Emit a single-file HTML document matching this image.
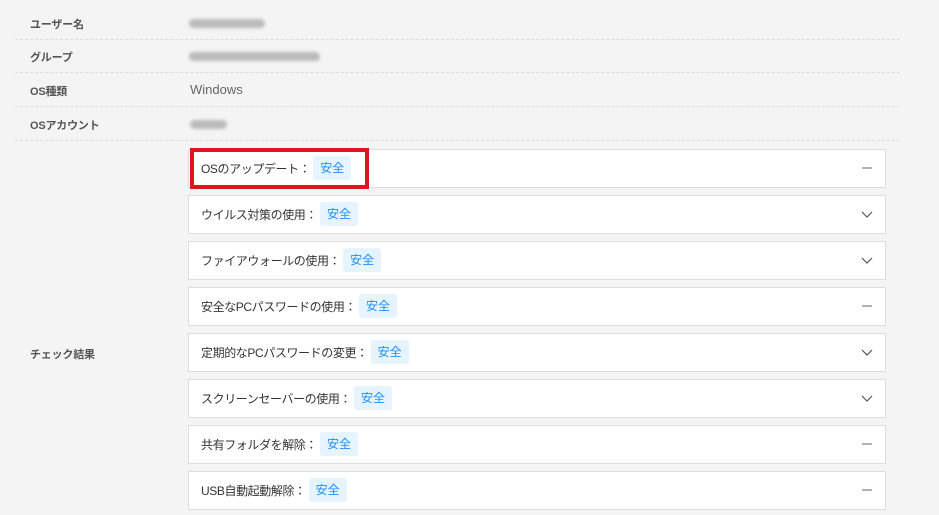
<!DOCTYPE html>
<html><head><meta charset="utf-8"><style>
body{margin:0;width:939px;height:515px;background:#f4f4f4;font-family:"Liberation Sans","Noto Sans CJK JP",sans-serif;position:relative;overflow:hidden}
.row{position:absolute;left:15px;width:885px;border-bottom:1px dashed #ddd}
.lab{position:absolute;left:30px;font-size:11px;letter-spacing:-0.2px;font-weight:bold;color:#555}
.val{position:absolute;left:190px;font-size:13px;color:#666}
.blur{position:absolute;height:9px;background:#bbb;border-radius:5px;filter:blur(1.5px)}
.p{position:absolute;left:188px;width:696px;height:37px;background:#fff;border:1px solid #ddd}
.p .t{position:absolute;left:12px;top:10px;font-size:12px;letter-spacing:-0.4px;color:#333;line-height:16px}
.b{display:inline-block;background:#e6f4ff;color:#1890ff;padding:3px 7px;border-radius:3px;margin-left:0;line-height:18px;vertical-align:middle;margin-top:-4px;font-size:12px;letter-spacing:0}
.ic{position:absolute;right:12px;top:12px;width:12px;height:12px}
</style></head><body>
<div class="row" style="top:0;height:39px"></div>
<div class="row" style="top:40px;height:32px"></div>
<div class="row" style="top:73px;height:33px"></div>
<div class="row" style="top:107px;height:33px"></div>
<div class="lab" style="top:16px">ユーザー名</div>
<div class="lab" style="top:49px">グループ</div>
<div class="lab" style="top:83px">OS種類</div>
<div class="lab" style="top:117px">OSアカウント</div>
<div class="lab" style="top:346px">チェック結果</div>
<div class="blur" style="left:189px;top:19px;width:76px"></div>
<div class="blur" style="left:189px;top:52px;width:131px"></div>
<div class="val" style="top:82px">Windows</div>
<div class="blur" style="left:190px;top:120px;width:37px"></div>

<div class="p" style="top:149px"><div class="t">OSのアップデート： <span class="b">安全</span></div><svg class="ic" viewBox="0 0 12 12"><path d="M1 6H11" stroke="#888" stroke-width="1.3"/></svg></div>
<div style="position:absolute;left:190px;top:148px;width:171px;height:33px;border:4px solid #e3141e"></div>
<div class="p" style="top:195px"><div class="t">ウイルス対策の使用： <span class="b">安全</span></div><svg class="ic" viewBox="0 0 12 12"><path d="M1 4L6 9L11 4" fill="none" stroke="#555" stroke-width="1.2"/></svg></div>
<div class="p" style="top:241px"><div class="t">ファイアウォールの使用： <span class="b">安全</span></div><svg class="ic" viewBox="0 0 12 12"><path d="M1 4L6 9L11 4" fill="none" stroke="#555" stroke-width="1.2"/></svg></div>
<div class="p" style="top:287px"><div class="t">安全なPCパスワードの使用： <span class="b">安全</span></div><svg class="ic" viewBox="0 0 12 12"><path d="M1 6H11" stroke="#888" stroke-width="1.3"/></svg></div>
<div class="p" style="top:333px"><div class="t">定期的なPCパスワードの変更： <span class="b">安全</span></div><svg class="ic" viewBox="0 0 12 12"><path d="M1 4L6 9L11 4" fill="none" stroke="#555" stroke-width="1.2"/></svg></div>
<div class="p" style="top:379px"><div class="t">スクリーンセーバーの使用： <span class="b">安全</span></div><svg class="ic" viewBox="0 0 12 12"><path d="M1 4L6 9L11 4" fill="none" stroke="#555" stroke-width="1.2"/></svg></div>
<div class="p" style="top:425px"><div class="t">共有フォルダを解除： <span class="b">安全</span></div><svg class="ic" viewBox="0 0 12 12"><path d="M1 6H11" stroke="#888" stroke-width="1.3"/></svg></div>
<div class="p" style="top:471px"><div class="t">USB自動起動解除： <span class="b">安全</span></div><svg class="ic" viewBox="0 0 12 12"><path d="M1 6H11" stroke="#888" stroke-width="1.3"/></svg></div>
</body></html>
